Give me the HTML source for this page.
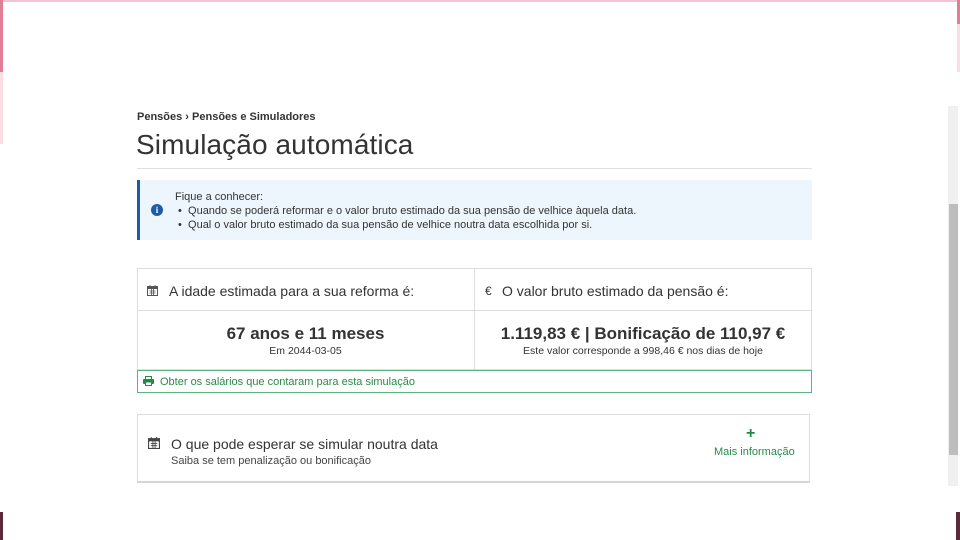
<!DOCTYPE html>
<html><head><meta charset="utf-8"><style>
*{margin:0;padding:0;box-sizing:border-box}
body{width:960px;height:540px;overflow:hidden;background:#fff;font-family:"Liberation Sans",sans-serif;color:#333;position:relative}
.a{position:absolute}
</style></head><body>
<div class="a" style="left:0;top:0;width:960px;height:2px;background:#f7c3d0"></div>
<div class="a" style="left:0;top:0;width:3px;height:72px;background:#e07e98"></div>
<div class="a" style="left:0;top:72px;width:3px;height:72px;background:#fbdde4"></div>
<div class="a" style="left:957px;top:0;width:3px;height:24px;background:#e07e98"></div>
<div class="a" style="left:957px;top:24px;width:3px;height:48px;background:#fbdde4"></div>
<div class="a" style="left:0;top:512px;width:3px;height:28px;background:#5a2a3c"></div>
<div class="a" style="left:956px;top:512px;width:4px;height:28px;background:#5a2a3c"></div>
<div class="a" style="left:948px;top:106px;width:10px;height:380px;background:#f0f0f0"></div>
<div class="a" style="left:949px;top:204px;width:9px;height:251px;background:#bdbdbd"></div>

<div class="a" style="left:137px;top:111px;font-size:11px;font-weight:bold;color:#333">Pensões › Pensões e Simuladores</div>
<div class="a" style="left:136px;top:129px;font-size:28px;color:#333;letter-spacing:0.1px">Simulação automática</div>
<div class="a" style="left:137px;top:168px;width:675px;height:1px;background:#e2e2e2"></div>

<div class="a" style="left:137px;top:180px;width:675px;height:60px;background:#eef6fd;border-left:3px solid #1f5aa6"></div>
<div class="a" style="left:151px;top:204px;width:12px;height:12px;border-radius:50%;background:#1f5aa6;color:#fff;font-size:9px;font-weight:bold;text-align:center;line-height:12px;font-family:'Liberation Serif',serif">i</div>
<div class="a" style="left:175px;top:190px;font-size:11px;line-height:14px;color:#333">Fique a conhecer:<br>&nbsp;•&nbsp; Quando se poderá reformar e o valor bruto estimado da sua pensão de velhice àquela data.<br>&nbsp;•&nbsp; Qual o valor bruto estimado da sua pensão de velhice noutra data escolhida por si.</div>

<div class="a" style="left:137px;top:268px;width:675px;height:102px;border:1px solid #ddd"></div>
<div class="a" style="left:137px;top:310px;width:675px;height:1px;background:#ddd"></div>
<div class="a" style="left:474px;top:268px;width:1px;height:102px;background:#ddd"></div>
<svg class="a" style="left:147px;top:285px" width="11" height="11" viewBox="0 0 11 11"><rect x="0.5" y="1.5" width="10" height="9" fill="none" stroke="#555"/><rect x="0.5" y="1.5" width="10" height="2.5" fill="#555"/><path d="M3 0v3M8 0v3M2.5 6h6M2.5 8h6M4.5 4v6M6.5 4v6" stroke="#555" stroke-width="0.8"/></svg>
<div class="a" style="left:169px;top:283px;font-size:14px;color:#333">A idade estimada para a sua reforma é:</div>
<div class="a" style="left:485px;top:284px;font-size:12px;color:#333">€</div>
<div class="a" style="left:502px;top:283px;font-size:14px;color:#333">O valor bruto estimado da pensão é:</div>
<div class="a" style="left:137px;top:324px;width:337px;text-align:center;font-size:17px;font-weight:bold;color:#333">67 anos e 11 meses</div>
<div class="a" style="left:137px;top:345px;width:337px;text-align:center;font-size:10.5px;color:#333">Em 2044-03-05</div>
<div class="a" style="left:474px;top:324px;width:338px;text-align:center;font-size:17px;font-weight:bold;color:#333">1.119,83 € | Bonificação de 110,97 €</div>
<div class="a" style="left:474px;top:345px;width:338px;text-align:center;font-size:10.5px;color:#333">Este valor corresponde a 998,46 € nos dias de hoje</div>

<div class="a" style="left:137px;top:370px;width:675px;height:23px;border:1px solid #5cb37f"></div>
<svg class="a" style="left:143px;top:376px" width="11" height="10" viewBox="0 0 11 10"><rect x="2.5" y="0.5" width="6" height="3" fill="none" stroke="#1e8c45"/><rect x="0" y="3" width="11" height="5" rx="1" fill="#1e8c45"/><rect x="2.5" y="6" width="6" height="3.5" fill="#fff" stroke="#1e8c45"/></svg>
<div class="a" style="left:160px;top:376px;font-size:11px;color:#2a8a4a">Obter os salários que contaram para esta simulação</div>

<div class="a" style="left:137px;top:414px;width:673px;height:69px;border:1px solid #ddd;border-bottom:2px solid #d5d5d5"></div>
<svg class="a" style="left:148px;top:437px" width="12" height="12" viewBox="0 0 11 11"><rect x="0.5" y="1.5" width="10" height="9" fill="none" stroke="#444"/><rect x="0.5" y="1.5" width="10" height="2.5" fill="#444"/><path d="M3 0v3M8 0v3M2.5 6h6M2.5 8h6M4.5 4v6M6.5 4v6" stroke="#444" stroke-width="0.8"/></svg>
<div class="a" style="left:171px;top:436px;font-size:14px;color:#333">O que pode esperar se simular noutra data</div>
<div class="a" style="left:171px;top:455px;font-size:11px;color:#444">Saiba se tem penalização ou bonificação</div>
<div class="a" style="left:746px;top:425px;font-size:16px;font-weight:bold;color:#1e8c45">+</div>
<div class="a" style="left:714px;top:446px;font-size:11px;color:#2a8a4a">Mais informação</div>
</body></html>
